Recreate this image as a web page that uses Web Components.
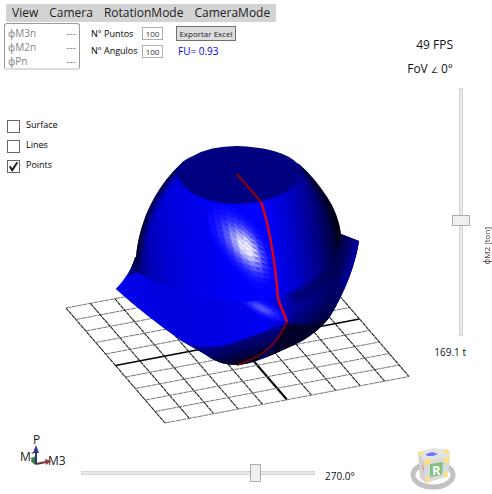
<!DOCTYPE html>
<html lang="es">
<head>
<meta charset="utf-8">
<title>Surface viewer</title>
<style>
body { margin: 0; background: #fff; color: #111; font: 12px/16px "Open Sans", "Noto Sans", sans-serif; }
</style>
</head>
<body>
<surface-viewer></surface-viewer>
<script>
const define = (name, html, setup) => customElements.define(name, class extends HTMLElement {
  constructor() {
    super();
    this.attachShadow({ mode: 'open' }).innerHTML = html;
  }
  connectedCallback() { if (setup && !this.ready) { this.ready = true; setup(this, this.shadowRoot); } }
});

define('menu-bar', `
<style>
:host { display: flex; width: max-content; margin: 4px 0 0 6px; background: #d3d3d3; }
nav { display: flex; gap: 11px; padding: 0 6px; }
button { all: unset; font-size: 12px; line-height: 18px; color: #222; cursor: pointer; }
</style>
<nav><button>View</button><button>Camera</button><button>RotationMode</button><button>CameraMode</button></nav>`);

define('force-readout', `
<style>
:host { display: block; box-sizing: border-box; width: 76px; height: 47px; padding: 2px 3px 0; border: 1px solid #999;
  border-bottom: 2px solid #ddd; border-radius: 3px; color: #858585; font-size: 10px; line-height: 14px; }
dl { display: grid; grid-template-columns: 1fr auto; margin: 0; }
dd { margin: 0; }
</style>
<dl><dt>ϕM3n</dt><dd>---</dd><dt>ϕM2n</dt><dd>---</dd><dt>ϕPn</dt><dd>---</dd></dl>`);

define('mesh-settings', `
<style>
:host { display: grid; grid-template-columns: 51px 21px 60px; row-gap: 2px; align-items: center;
  font-size: 9px; line-height: 14px; color: #000; margin-top: 3px; }
input { box-sizing: border-box; width: 21px; height: 13px; padding: 0; border: 1px solid #abadb3; text-align: center;
  background: #fff; font: 8px/11px "Open Sans", sans-serif; color: #333; }
button { box-sizing: border-box; height: 15px; margin-left: 13px; padding: 0; width: 60px; border: 1px solid #707070; background: #ddd;
  font: 8px/12px "Open Sans", sans-serif; color: #222; white-space: nowrap; }
output { margin-left: 15px; color: #00f; font-size: 10px; line-height: 16px; white-space: nowrap; }
label { white-space: nowrap; }
</style>
<label for="p">N° Puntos</label><input id="p" value="100"><button>Exportar Excel</button>
<label for="a">N° Angulos</label><input id="a" value="100"><output>FU= 0.93</output>`);

define('check-option', `
<style>
:host { display: block; height: 20px; }
label { display: flex; gap: 6px; font-size: 9px; line-height: 14px; color: #000; }
input { appearance: none; flex: none; box-sizing: border-box; display: grid; width: 13px; height: 13px; margin: 2px 0 0;
  border: 1px solid #666; background: #fff; }
input:checked::before { content: ""; width: 11px; height: 11px; background: #222;
  clip-path: polygon(8% 50%, 25% 46%, 38% 66%, 76% 10%, 94% 14%, 44% 94%, 32% 94%); }
</style>
<label><input type="checkbox"><slot></slot></label>`,
(host, root) => { root.querySelector('input').checked = host.hasAttribute('checked'); });

define('value-slider', `
<style>
:host { display: block; }
input { appearance: none; display: block; margin: 0; width: 100%; height: 18px; background: transparent; }
input::-webkit-slider-runnable-track { box-sizing: border-box; height: 4px; background: #e7eaea; border: 1px solid #d6d6d6; }
input::-webkit-slider-thumb { appearance: none; box-sizing: border-box; width: 11px; height: 18px; margin-top: -8px;
  background: #f0f0f0; border: 1px solid #acacac; }
:host([vertical]) input { writing-mode: vertical-lr; direction: rtl; width: 18px; height: 248px; }
:host([vertical]) input::-webkit-slider-runnable-track { width: 4px; height: auto; }
:host([vertical]) input::-webkit-slider-thumb { width: 18px; height: 11px; margin: 0 0 0 -8px; }
</style>
<input type="range" min="0" max="100" step="any">`,
(host, root) => {
  const input = root.querySelector('input');
  input.value = host.getAttribute('value');
  input.setAttribute('aria-label', host.getAttribute('label'));
});

define('capacity-scene', `
<style>
:host { display: block; }
svg { display: block; width: 100%; height: auto; overflow: visible; }
</style>
<svg viewBox="62 140 344 286" aria-label="3D surface">
<defs>
  <linearGradient id="body" gradientUnits="userSpaceOnUse" x1="136" y1="250" x2="342" y2="226">
    <stop offset="0" stop-color="#000070"/><stop offset=".05" stop-color="#0000b0"/><stop offset=".12" stop-color="#0000cc"/>
    <stop offset=".24" stop-color="#0000e2"/><stop offset=".42" stop-color="#0000f5"/><stop offset=".6" stop-color="#0202ff"/>
    <stop offset=".67" stop-color="#0000ee"/><stop offset=".76" stop-color="#0000c8"/><stop offset=".87" stop-color="#000084"/>
    <stop offset=".95" stop-color="#000040"/><stop offset="1" stop-color="#000008"/>
  </linearGradient>
  <linearGradient id="flange" gradientUnits="userSpaceOnUse" x1="118" y1="280" x2="356" y2="290">
    <stop offset="0" stop-color="#0404ee"/><stop offset=".2" stop-color="#0000dc"/><stop offset=".45" stop-color="#0000e4"/>
    <stop offset=".62" stop-color="#0000f4"/><stop offset=".7" stop-color="#0000c8"/><stop offset=".82" stop-color="#000094"/>
    <stop offset=".92" stop-color="#000060"/><stop offset="1" stop-color="#000090"/>
  </linearGradient>
  <linearGradient id="under" gradientUnits="userSpaceOnUse" x1="235" y1="333" x2="244" y2="366">
    <stop offset="0" stop-color="#0000a0"/><stop offset=".5" stop-color="#000060"/><stop offset="1" stop-color="#00000c"/>
  </linearGradient>
  <linearGradient id="rim" gradientUnits="userSpaceOnUse" x1="294" y1="298" x2="316" y2="332">
    <stop offset="0" stop-color="#000060" stop-opacity="0"/><stop offset="1" stop-color="#000034"/>
  </linearGradient>
  <clipPath id="bodyClip"><path d="M184 161C158 184 140 217 136 257Q131 268 127 277L138 272C160 287 200 301 240 302C270 302 300 291 322 273C336 259 341 246 341 234Q338 213 327 197Q314 177 299 164L286 158L200 158Z"/></clipPath>
  <clipPath id="flangeClip"><path d="M116 289Q128 276 135 260L341 234L359 241C356 262 346 291 328 319Q306 328 287 323L236 342Q206 352 183 342Q147 317 116 289Z"/></clipPath>
  <filter id="soft" x="-30%" y="-30%" width="160%" height="160%"><feGaussianBlur stdDeviation="3"/></filter>
</defs>
<g id="grid"></g>
<path fill="#000090" d="M116 289L127 278Q132 267 135 257L341 234L359 241C356 262 346 291 330 317Q319 331 302 341Q280 352 262 359Q249 364 238 365Q218 365 206 355L185 342Q147 317 116 289Z"/>
<path fill="url(#under)" d="M183 342Q210 352 236 342L287 322Q277 347 258 360Q249 364 238 365Q218 365 206 355Z"/>
<path fill="#000028" d="M286 322L329 318Q319 331 302 341Q280 352 262 359Q278 347 286 322Z"/>
<g clip-path="url(#flangeClip)">
  <rect x="110" y="225" width="255" height="150" fill="url(#flange)"/>
  <path d="M344 234Q345 256 328 275Q310 292 290 299" fill="none" stroke="#000040" stroke-width="12" opacity=".5" filter="url(#soft)"/>
  <path d="M359 241Q353 272 333 307" fill="none" stroke="#0000a8" stroke-width="6" filter="url(#soft)"/>
  <path fill="url(#rim)" d="M284 302L287 330L330 330L345 285L330 285Z"/>
</g>
<g id="glint2"></g>
<g clip-path="url(#bodyClip)">
  <rect x="110" y="140" width="240" height="170" fill="url(#body)"/>
  <path d="M178 160C152 185 138 213 133 246L129 262" fill="none" stroke="#000008" stroke-width="15" opacity=".95" filter="url(#soft)"/>
  <path d="M303 162Q331 189 345 234" fill="none" stroke="#000008" stroke-width="14" opacity=".8" filter="url(#soft)"/>
  <g id="glint"></g>
</g>
<path fill="#000080" d="M177 173C176 165 187 158 193 156Q210 146 237 146C264 147 280 152 289 157Q300 163 301 172C300 189 272 204 235 204C202 203 179 189 177 173Z"/>
<g fill="none" stroke-linejoin="round">
  <path d="M237 174L261 202" stroke="#8a0008" stroke-width="2"/>
  <path d="M261 202C268 221 275 258 278 299L287 322" stroke="#df0010" stroke-width="2.4"/>
  <path d="M287 322C277 344 265 356 237 365" stroke="#6e0010" stroke-width="2"/>
</g>
</svg>`,
(host, root) => {
  // floor: ten cells each way, the centre lines heavier
  const lines = [];
  for (let i = 0; i <= 10; i++) {
    const a = 66 + 9.9 * i, b = 308 + 11.5 * i, mid = i === 5;
    lines.push(`<path d="M${a} ${b}l244 -46.5" stroke="${mid ? '#000' : '#777'}" stroke-width="${mid ? 1.5 : 1}" ${mid ? '' : 'stroke-dasharray="5 .6"'}/>`);
    const c = 66 + 24.4 * i, d = 308 - 4.65 * i;
    lines.push(`<path d="M${c} ${d}l99 115" stroke="${mid ? '#000' : '#222'}" stroke-width="${mid ? 2 : 1.1}" ${mid ? '' : 'stroke-dasharray="4 .5"'}/>`);
  }
  root.getElementById('grid').innerHTML = lines.join('');

  // faceted specular highlight
  const facets = (cx, cy, us, vs, du, dv, fall) => {
    const out = [];
    const pt = (u, v) => [cx + u * du[0] + v * dv[0] - v * Math.abs(v) * .04, cy + u * du[1] + v * dv[1] - u * u * .07].map(n => n.toFixed(1)).join(' ');
    for (let u = -us; u <= us; u++) for (let v = -vs; v <= vs; v++) {
      [0, 1].forEach(t => {
        const k = fall(u + (t ? .35 : -.1), v + (t ? -.3 : .1)) * (t ? .88 : 1);
        if (k < .02) return;
        const w = Math.round(Math.min(1, k) * 245);
        const p = t ? [pt(u, v), pt(u + 1, v), pt(u + 1, v + 1)] : [pt(u, v), pt(u, v + 1), pt(u + 1, v + 1)];
        out.push(`<path d="M${p.join('L')}Z" fill="rgb(${w},${w},255)" stroke="rgb(${w},${w},255)" stroke-width=".3"/>`);
      });
    }
    return out.join('');
  };
  root.getElementById('glint').innerHTML = facets(245, 245, 6, 9, [6.6, 1.4], [1.3, 5.2],
    (u, v) => Math.exp(-(u * u / (u > 0 ? 3 : 7) + v * v / 13 - u * v / 14)) * 1.15);
  root.getElementById('glint2').innerHTML = facets(259, 306, 4, 3, [6, 2.2], [2, 3.2],
    (u, v) => .42 * Math.exp(-(u * u / 5 + v * v / 4)));
});

define('axis-gizmo', `
<style>
:host { display: block; }
svg { display: block; font: 12px "Open Sans", sans-serif; fill: #222; }
</style>
<svg width="50" height="42" viewBox="18 430 50 42" aria-label="Axes">
<text x="33" y="444">P</text><text x="20" y="461">M2</text><text x="48" y="465">M3</text>
<path d="M36 464L32 460" stroke="#2c7f34" stroke-width="3"/><path d="M30 458l5 -1l0 5Z" fill="#2c8a34"/>
<path d="M36 464L46 462" stroke="#7c3038" stroke-width="2"/><path d="M45 459l6 2l-5 4Z" fill="#8a3a40"/>
<path d="M36 464V452" stroke="#34347c" stroke-width="2"/><path d="M33 453l3 -8l3 8Z" fill="#34348c"/>
</svg>`);

define('view-cube', `
<style>
:host { display: block; }
svg { display: block; font: bold 13px "Open Sans", sans-serif; }
</style>
<svg width="48" height="46" viewBox="410 446 48 46" aria-label="View cube">
<ellipse cx="434" cy="475" rx="20" ry="12" fill="none" stroke="#c2c2c2" stroke-width="5"/>
<path d="M419 452L435 448L450 450L451 458L425 461Z" fill="#e3e3e3"/>
<path d="M419 452L425 461L427 483L421 478Z" fill="#d2d2d2"/>
<path d="M425 461L451 457L449 476L427 483Z" fill="#dadada"/>
<g fill="#ffe07c"><path d="M419 452l4 -1l2 3l-5 1Z"/><path d="M445 449l5 1l1 4l-5 -1Z"/><path d="M425 460l6 -1l1 5l-6 1Z"/>
<path d="M445 458l6 -1l-1 5l-5 1Z"/><path d="M426 478l5 -1v4l-4 2Z"/><path d="M445 473l4 -1v4l-4 2Z"/></g>
<path d="M423 463l2 5v4l-2 -4Z" fill="#ef9aa0"/>
<path d="M427 454l6 -2l6 2l-5 2l-6 0Z" fill="#7078f0"/>
<path d="M431 464L444 462L443 475L431 477Z" fill="#7fc083"/>
<text x="433" y="475" fill="#fff">R</text>
</svg>`);

define('load-panel', `
<style>
:host { display: block; padding-top: 37px; text-align: right; color: #111; white-space: nowrap; }
p { margin: 0 39px 8px 0; font-size: 12px; line-height: 16px; }
small { font-size: 8px; }
.slide { display: flex; justify-content: flex-end; align-items: center; gap: 12px; margin-top: 10px; }
.axis { writing-mode: vertical-rl; transform: rotate(180deg); font-size: 8px; line-height: 10px; color: #4a3340; margin-top: 68px; }
output { display: block; margin: 8px 26px 0 0; font-size: 10px; line-height: 16px; }
</style>
<p>49 FPS</p><p>FoV <small>∠</small> 0°</p>
<div class="slide"><value-slider vertical value="46.6" label="ϕM2 [ton]"></value-slider><span class="axis">ϕM2 [ton]</span></div>
<output>169.1 t</output>`);

define('surface-viewer', `
<style>
:host { display: grid; grid-template-columns: minmax(0, 1fr) 86px; }
.tools { display: flex; gap: 11px; align-items: start; padding-left: 4px; margin-top: 1px; }
.view { display: grid; grid-template-columns: 55px minmax(0, 1fr); padding-left: 7px; }
.options { padding-top: 48px; }
capacity-scene { margin-top: 70px; }
footer { grid-column: 1 / -1; display: flex; align-items: start; padding: 4px 35px 0 18px; }
footer value-slider { flex: 1; margin: 34px 0 0 13px; }
output { width: 84px; padding-left: 10px; margin-top: 38px; font-size: 10px; line-height: 16px; }
view-cube { margin-top: 16px; }
</style>
<main>
  <menu-bar></menu-bar>
  <div class="tools"><force-readout></force-readout><mesh-settings></mesh-settings></div>
  <div class="view">
    <div class="options"><check-option>Surface</check-option><check-option>Lines</check-option><check-option checked>Points</check-option></div>
    <capacity-scene></capacity-scene>
  </div>
</main>
<load-panel></load-panel>
<footer>
  <axis-gizmo></axis-gizmo>
  <value-slider value="76.2" label="Rotation"></value-slider>
  <output>270.0°</output>
  <view-cube></view-cube>
</footer>`);
</script>
</body>
</html>
